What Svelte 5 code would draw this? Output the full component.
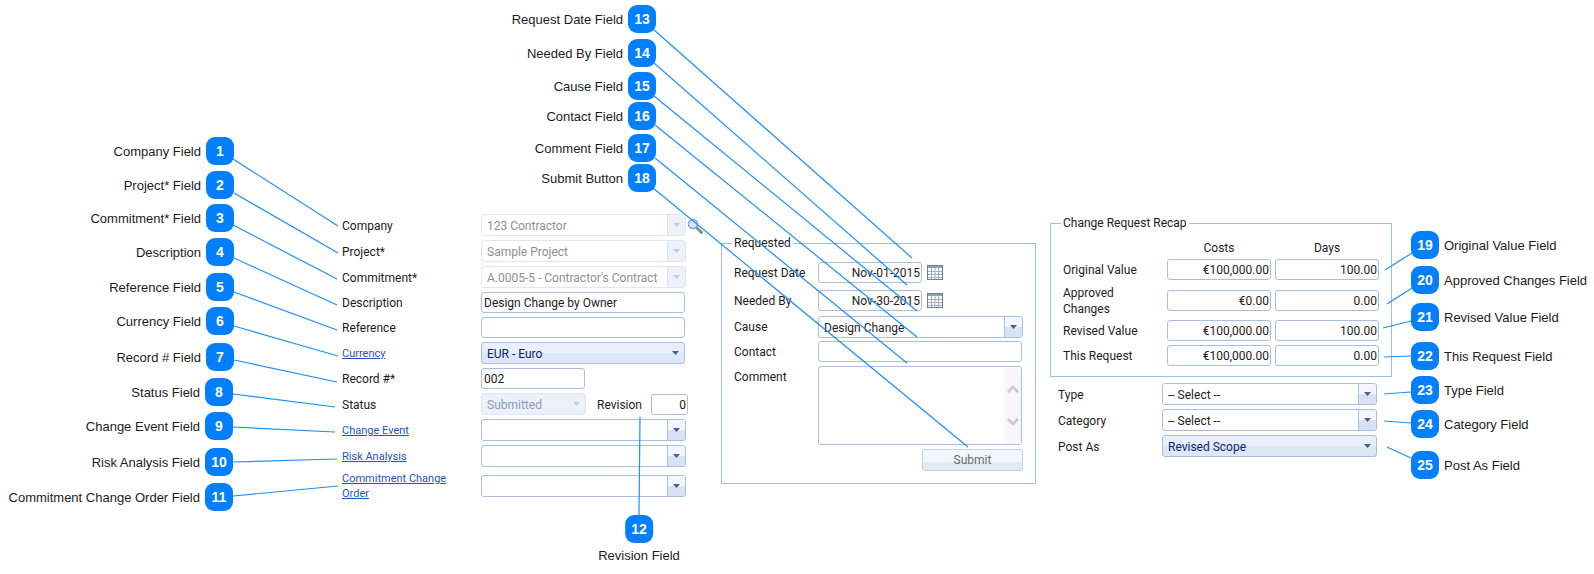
<script>
  // callouts: n, text, side, x/y of badge top-left, and leader line end
  const callouts = [
    { n: 1, text: 'Company Field', side: 'left', x: 206, y: 137, line: [233, 159, 338, 226] },
    { n: 2, text: 'Project* Field', side: 'left', x: 206, y: 171, line: [234, 193, 338, 253] },
    { n: 3, text: 'Commitment* Field', side: 'left', x: 206, y: 204, line: [233, 225, 337, 279] },
    { n: 4, text: 'Description', side: 'left', x: 206, y: 238, line: [234, 258, 337, 305] },
    { n: 5, text: 'Reference Field', side: 'left', x: 206, y: 273, line: [234, 292, 337, 330] },
    { n: 6, text: 'Currency Field', side: 'left', x: 206, y: 307, line: [234, 326, 338, 356] },
    { n: 7, text: 'Record # Field', side: 'left', x: 206, y: 343, line: [234, 360, 337, 382] },
    { n: 8, text: 'Status Field', side: 'left', x: 205, y: 378, line: [233, 394, 335, 407] },
    { n: 9, text: 'Change Event Field', side: 'left', x: 205, y: 412, line: [233, 427, 335, 432] },
    { n: 10, text: 'Risk Analysis Field', side: 'left', x: 205, y: 448, line: [233, 462, 337, 459] },
    { n: 11, text: 'Commitment Change Order Field', side: 'left', x: 205, y: 483, line: [233, 496, 338, 486] },
    { n: 12, text: 'Revision Field', side: 'below', x: 625, y: 515, line: [639, 515, 640, 417] },
    { n: 13, text: 'Request Date Field', side: 'left', x: 628, y: 5, line: [653, 29, 912, 258] },
    { n: 14, text: 'Needed By Field', side: 'left', x: 628, y: 39, line: [654, 63, 907, 285] },
    { n: 15, text: 'Cause Field', side: 'left', x: 628, y: 72, line: [654, 96, 917, 311] },
    { n: 16, text: 'Contact Field', side: 'left', x: 628, y: 102, line: [655, 125, 917, 337] },
    { n: 17, text: 'Comment Field', side: 'left', x: 628, y: 134, line: [655, 158, 907, 363] },
    { n: 18, text: 'Submit Button', side: 'left', x: 628, y: 164, line: [653, 188, 968, 447] },
    { n: 19, text: 'Original Value Field', side: 'right', x: 1411, y: 231, line: [1412, 253, 1385, 270] },
    { n: 20, text: 'Approved Changes Field', side: 'right', x: 1411, y: 266, line: [1412, 288, 1387, 304] },
    { n: 21, text: 'Revised Value Field', side: 'right', x: 1411, y: 303, line: [1411, 321, 1383, 328] },
    { n: 22, text: 'This Request Field', side: 'right', x: 1411, y: 342, line: [1411, 356, 1384, 357] },
    { n: 23, text: 'Type Field', side: 'right', x: 1411, y: 376, line: [1411, 392, 1384, 394] },
    { n: 24, text: 'Category Field', side: 'right', x: 1411, y: 410, line: [1411, 423, 1384, 421] },
    { n: 25, text: 'Post As Field', side: 'right', x: 1411, y: 451, line: [1411, 458, 1387, 447] }
  ];

  const recap = [
    { label: 'Original Value', cost: '€100,000.00', days: '100.00' },
    { label: 'Approved Changes', cost: '€0.00', days: '0.00' },
    { label: 'Revised Value', cost: '€100,000.00', days: '100.00' },
    { label: 'This Request', cost: '€100,000.00', days: '0.00' }
  ];

  const placeCallout = (c) => {
    if (c.side === 'left') return `right:${1594 - c.x - 28}px;top:${c.y}px`;
    if (c.side === 'below') return `left:${c.x + 14}px;top:${c.y}px`;
    return `left:${c.x}px;top:${c.y}px`;
  };
</script>

{#snippet arrow()}
  <svg class="tri" width="7" height="4" viewBox="0 0 7 4"><path d="M0 0h7L3.500 4z" /></svg>
{/snippet}

{#snippet calendar()}
  <svg class="cal" width="16" height="15" viewBox="0 0 16 15">
    <rect x="0.500" y="0.500" width="15" height="14" fill="#fff" stroke="#6d8194" />
    <rect x="1" y="1" width="14" height="2" fill="#8ea3b8" />
    <path d="M1 6.500h14M1 9.500h14M1 12.500h14M4.500 3v11M8 3v11M11.500 3v11" stroke="#9fb0c4" fill="none" />
  </svg>
{/snippet}

<div class="canvas">
  <!-- left form -->
  <section class="form-left">
    <div class="row"><span class="lbl">Company</span>
      <div class="combo off"><span class="val">123 Contractor</span><span class="btn">{@render arrow()}</span></div>
      <svg class="search" width="16" height="16" viewBox="0 0 16 16">
        <path d="M9.500 9.500l5 5" stroke="#7f8ea3" stroke-width="3" stroke-linecap="round" />
        <circle cx="6" cy="6" r="4.500" fill="#d5e6f7" stroke="#8da3bb" stroke-width="1.500" />
      </svg>
    </div>
    <div class="row"><span class="lbl">Project*</span>
      <div class="combo off"><span class="val">Sample Project</span><span class="btn">{@render arrow()}</span></div>
    </div>
    <div class="row"><span class="lbl">Commitment*</span>
      <div class="combo off"><span class="val">A.0005-5 - Contractor's Contract</span><span class="btn">{@render arrow()}</span></div>
    </div>
    <div class="row short"><span class="lbl">Description</span>
      <input class="txt wide" readonly value="Design Change by Owner" />
    </div>
    <div class="row short"><span class="lbl">Reference</span>
      <input class="txt wide" readonly value="" />
    </div>
    <div class="row"><a class="lbl link" href="#currency">Currency</a>
      <div class="combo picked wide"><span class="val">EUR - Euro</span>{@render arrow()}</div>
    </div>
    <div class="row short"><span class="lbl">Record #*</span>
      <input class="txt record" readonly value="002" />
    </div>
    <div class="row"><span class="lbl">Status</span>
      <div class="combo off flat status"><span class="val">Submitted</span>{@render arrow()}</div>
      <span class="rev-lbl">Revision</span>
      <input class="txt num rev" readonly value="0" />
    </div>
    <div class="row"><a class="lbl link" href="#event">Change Event</a>
      <div class="combo"><span class="val"></span><span class="btn">{@render arrow()}</span></div>
    </div>
    <div class="row"><a class="lbl link" href="#risk">Risk Analysis</a>
      <div class="combo"><span class="val"></span><span class="btn">{@render arrow()}</span></div>
    </div>
    <div class="row last"><a class="link two" href="#order">Commitment Change Order</a>
      <div class="combo"><span class="val"></span><span class="btn">{@render arrow()}</span></div>
    </div>
  </section>

  <!-- requested group -->
  <section class="group requested">
    <span class="legend">Requested</span>
    <div class="req-grid">
      <span class="lbl">Request Date</span>
      <div class="date"><input class="txt num" readonly value="Nov-01-2015" />{@render calendar()}</div>
      <span class="lbl">Needed By</span>
      <div class="date"><input class="txt num" readonly value="Nov-30-2015" />{@render calendar()}</div>
      <span class="lbl">Cause</span>
      <div class="combo"><span class="val">Design Change</span><span class="btn">{@render arrow()}</span></div>
      <span class="lbl">Contact</span>
      <input class="txt" readonly value="" />
      <span class="lbl">Comment</span>
      <div class="memo">
        <div class="bar">
          <svg width="12" height="8" viewBox="0 0 12 8"><path d="M1 7l5-5 5 5" fill="none" stroke="#c9c9c9" stroke-width="2.500" /></svg>
          <svg width="12" height="8" viewBox="0 0 12 8"><path d="M1 1l5 5 5-5" fill="none" stroke="#c9c9c9" stroke-width="2.500" /></svg>
        </div>
      </div>
      <button class="submit" type="button">Submit</button>
    </div>
  </section>

  <!-- recap group -->
  <section class="group recap">
    <span class="legend">Change Request Recap</span>
    <div class="recap-head"><span>Costs</span><span>Days</span></div>
    {#each recap as r}
      <div class="recap-row">
        <span class="lbl">{r.label}</span>
        <input class="txt num" readonly value={r.cost} />
        <input class="txt num" readonly value={r.days} />
      </div>
    {/each}
  </section>

  <section class="form-right">
    <div class="row"><span class="lbl">Type</span>
      <div class="combo"><span class="val">-- Select --</span><span class="btn">{@render arrow()}</span></div>
    </div>
    <div class="row"><span class="lbl">Category</span>
      <div class="combo"><span class="val">-- Select --</span><span class="btn">{@render arrow()}</span></div>
    </div>
    <div class="row"><span class="lbl">Post As</span>
      <div class="combo picked"><span class="val">Revised Scope</span>{@render arrow()}</div>
    </div>
  </section>

  <!-- leader lines and numbered callouts lie over the form -->
  <svg class="leaders" width="1594" height="574" viewBox="0 0 1594 574">
    {#each callouts as c}
      <line x1={c.line[0]} y1={c.line[1]} x2={c.line[2]} y2={c.line[3]} />
    {/each}
  </svg>

  {#each callouts as c}
    <div class="callout {c.side}" style={placeCallout(c)}>
      <span class="badge">{c.n}</span>
      <span class="note">{c.text}</span>
    </div>
  {/each}
</div>

<style>
  :global(body) {
    background: #fff;
  }

  .canvas {
    position: relative;
    width: 1594px;
    height: 574px;
    overflow: hidden;
    background: #fff;
    font-family: Roboto, "Liberation Sans", sans-serif;
    font-size: 12px;
    color: #1c1c1c;
  }

  /* form pieces */
  .form-left {
    position: absolute;
    left: 342px;
    top: 214px;
    display: flex;
    flex-direction: column;
    gap: 4px;
  }

  .form-right {
    position: absolute;
    left: 1058px;
    top: 383px;
    display: flex;
    flex-direction: column;
    gap: 4px;
  }

  .row {
    display: flex;
    align-items: center;
    height: 22px;
  }

  .row.short {
    height: 21px;
  }

  .row.last {
    margin-top: 4px;
  }

  .lbl {
    padding-top: 1px;
  }

  .form-left .lbl {
    width: 139px;
    flex: none;
  }

  .form-right .lbl {
    width: 104px;
    flex: none;
  }

  .link {
    color: #1d55c0;
    font-size: 11px;
    text-decoration: underline;
  }

  .link.two {
    line-height: 15px;
    width: 110px;
    margin-right: 29px;
    flex: none;
  }

  .combo {
    display: flex;
    align-items: center;
    box-sizing: border-box;
    width: 205px;
    height: 22px;
    border: 1px solid #a9bfdd;
    border-radius: 3px;
    background: #fff;
    overflow: hidden;
    flex: none;
  }

  .form-right .combo {
    width: 215px;
  }

  .combo.wide {
    width: 204px;
  }

  .val {
    flex: 1;
    padding: 1px 0 0 5px;
    white-space: nowrap;
  }

  .btn {
    display: flex;
    align-items: center;
    justify-content: center;
    width: 17px;
    height: 100%;
    border-left: 1px solid #a9bfdd;
    background: linear-gradient(#f3f6fc 0 50%, #d8e2f3 50% 100%);
    flex: none;
  }

  .tri {
    fill: #4c5c96;
    display: block;
  }

  .combo.off {
    border-color: #e0e7f2;
    color: #8f8f8f;
  }

  .combo.off .btn {
    border-left-color: #dbe3f0;
    background: #edf1f9;
  }

  .combo.off .tri {
    fill: #c6c9cf;
  }

  .combo.flat {
    background: #edf1f9;
    color: #8b9ab5;
    padding-right: 5px;
  }

  .combo.status {
    width: 105px;
  }

  .combo.picked {
    background: linear-gradient(#e9f0fb 0 50%, #dde7f6 50% 100%);
    color: #0c2273;
    padding-right: 5px;
  }

  .txt {
    box-sizing: border-box;
    width: 100%;
    height: 21px;
    margin: 0;
    padding: 1px 1px 0 2px;
    border: 1px solid #a9bfdd;
    border-radius: 3px;
    background: #fff;
    color: #1c1c1c;
    font: inherit;
    outline: none;
    min-width: 0;
  }

  .txt.wide {
    width: 204px;
  }

  .txt.record {
    width: 104px;
  }

  .txt.num {
    text-align: right;
  }

  .txt.rev {
    width: 37px;
  }

  .rev-lbl {
    margin-left: 11px;
    width: 54px;
    flex: none;
    padding-top: 1px;
  }

  .search {
    position: absolute;
    left: 345px;
    top: 4px;
  }

  /* bordered groups */
  .group {
    position: absolute;
    box-sizing: border-box;
    border: 1px solid #9dbfe0;
  }

  .legend {
    position: absolute;
    top: -9px;
    left: 10px;
    padding: 0 2px;
    background: #fff;
    line-height: 16px;
    white-space: nowrap;
  }

  .requested {
    left: 721px;
    top: 243px;
    width: 315px;
    height: 241px;
    padding: 18px 12px 0;
  }

  .req-grid {
    display: grid;
    grid-template-columns: 84px 205px;
    grid-template-rows: 28px 26px 25px 25px 83px 22px;
  }

  .req-grid .lbl {
    line-height: 21px;
  }

  .req-grid .txt {
    width: 204px;
  }

  .req-grid .date .txt {
    width: 104px;
  }

  .date {
    display: flex;
    align-items: flex-start;
    gap: 5px;
  }

  .cal {
    margin-top: 3px;
    flex: none;
  }

  .memo {
    box-sizing: border-box;
    width: 204px;
    height: 79px;
    border: 1px solid #a9bfdd;
    border-radius: 3px;
    display: flex;
    justify-content: flex-end;
    overflow: hidden;
  }

  .bar {
    width: 17px;
    background: #f7f7f7;
    display: flex;
    flex-direction: column;
    align-items: center;
    gap: 25px;
    padding-top: 18px;
  }

  .submit {
    grid-column: 2;
    justify-self: end;
    box-sizing: border-box;
    width: 101px;
    height: 22px;
    padding: 0;
    border: 1px solid #c5d3e6;
    border-radius: 2px;
    background: linear-gradient(#f3f6fd 0 60%, #e3eaf6 60% 100%);
    color: #6a6a6a;
    font: inherit;
  }

  .recap {
    left: 1050px;
    top: 223px;
    width: 342px;
    height: 154px;
    padding: 16px 12px 0;
  }

  .recap-head {
    display: grid;
    grid-template-columns: 104px 104px;
    column-gap: 4px;
    margin-left: 104px;
    height: 19px;
    line-height: 17px;
    text-align: center;
  }

  .recap-row {
    display: grid;
    grid-template-columns: 104px 104px 104px;
    grid-template-rows: 21px;
    align-items: center;
    height: 21px;
    margin-bottom: 4px;
  }

  .recap-row .txt:last-child {
    margin-left: 4px;
  }

  .recap-row .lbl {
    line-height: 16px;
    width: 80px;
  }

  .recap-row:nth-of-type(2) {
    margin-bottom: 10px;
  }

  .recap-row:nth-of-type(3) {
    margin-bottom: 9px;
  }

  /* callouts */
  .leaders {
    position: absolute;
    inset: 0;
    pointer-events: none;
  }

  .leaders line {
    stroke: #1e8fff;
    stroke-width: 1.200;
  }

  .callout {
    position: absolute;
    display: flex;
    align-items: center;
    gap: 5px;
    height: 28px;
    font-family: "Liberation Sans", Arial, sans-serif;
    font-size: 13px;
    color: #1c1c1c;
    white-space: nowrap;
  }

  .callout.left {
    flex-direction: row-reverse;
  }

  .callout.below {
    flex-direction: column;
    height: auto;
    transform: translateX(-50%);
  }

  .badge {
    display: flex;
    align-items: center;
    justify-content: center;
    width: 28px;
    height: 28px;
    border-radius: 9px;
    background: #007fff;
    color: #fff;
    font-size: 14px;
    font-weight: 700;
    flex: none;
  }
</style>
